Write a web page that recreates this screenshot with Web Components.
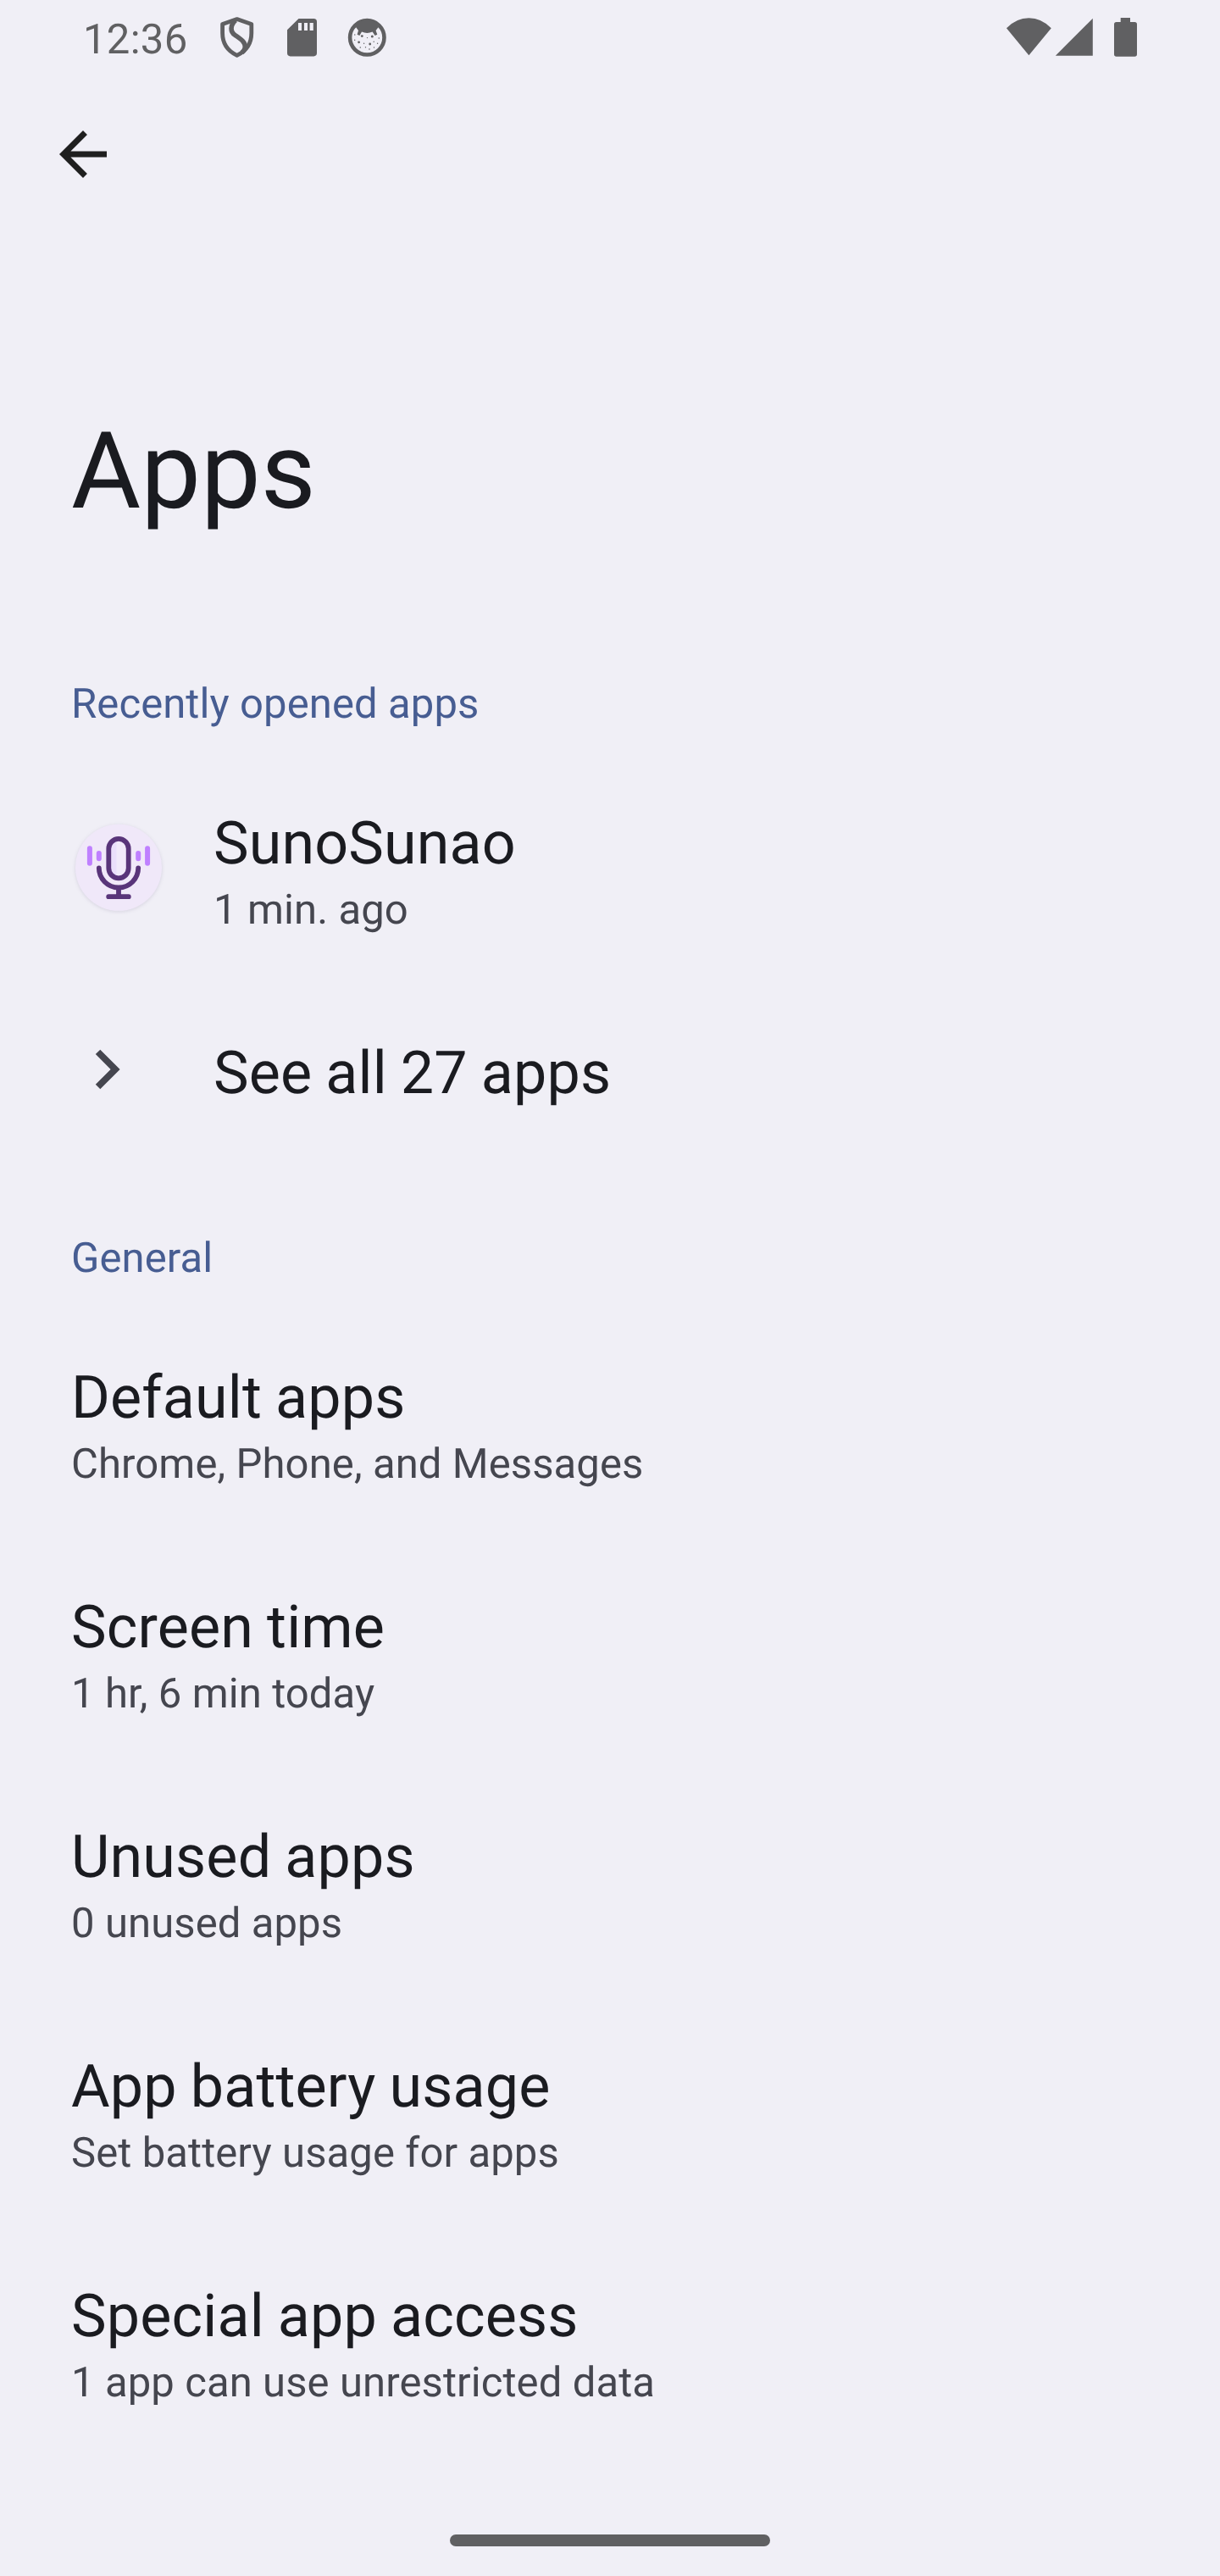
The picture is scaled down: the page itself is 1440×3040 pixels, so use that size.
<!DOCTYPE html>
<html lang="en">
<head>
<meta charset="utf-8">
<title>Apps</title>
<style>
html,body{margin:0;padding:0;background:#f0eff6}
body{width:1440px;height:3040px;overflow:hidden;font-family:Roboto,sans-serif;color:#1a1b20;text-rendering:geometricPrecision}
</style>
</head>
<body>
<settings-screen>
  <status-bar slot="status" time="12:36"></status-bar>
  <top-bar slot="top" heading="Apps"></top-bar>
  <section-header>Recently opened apps</section-header>
  <settings-row with-icon>
    <app-icon slot="icon"></app-icon>
    SunoSunao
    <span slot="summary">1 min. ago</span>
  </settings-row>
  <settings-row with-icon>
    <chevron-icon slot="icon"></chevron-icon>
    See all 27 apps
  </settings-row>
  <section-header>General</section-header>
  <settings-row>Default apps<span slot="summary">Chrome, Phone, and Messages</span></settings-row>
  <settings-row>Screen time<span slot="summary">1 hr, 6 min today</span></settings-row>
  <settings-row>Unused apps<span slot="summary">0 unused apps</span></settings-row>
  <settings-row>App battery usage<span slot="summary">Set battery usage for apps</span></settings-row>
  <settings-row>Special app access<span slot="summary">1 app can use unrestricted data</span></settings-row>
  <home-handle slot="nav"></home-handle>
</settings-screen>
<script>
const define = (name, render) => customElements.define(name, class extends HTMLElement {
  constructor() {
    super();
    this.attachShadow({ mode: 'open' }).innerHTML = render(this);
  }
});

define('settings-screen', () => `
<style>
:host{display:flex;flex-direction:column;width:1440px;height:3040px;background:#f0eff6}
main{flex:1;display:flex;flex-direction:column}
</style>
<slot name="status"></slot><slot name="top"></slot><main><slot></slot></main><slot name="nav"></slot>`);

define('status-bar', el => `
<style>
:host{display:flex;justify-content:space-between;height:90px;color:#606062}
div{display:flex}
.left{padding-left:98px}
time{display:block;width:152px;font-size:49px;letter-spacing:.3px;line-height:58px;padding-top:18px;box-sizing:border-box;white-space:nowrap}
svg{display:block;height:90px}
</style>
<div class="left">
  <time>${el.getAttribute('time')}</time>
  <svg width="60" viewBox="250 0 60 90" fill="none" stroke="currentColor" stroke-width="4.8" stroke-linejoin="round">
    <path d="M279.7 22.6L262.6 28.4V39C262.6 51.5 269 60.3 279.7 65.3C290.4 60.3 296.8 51.5 296.8 39V28.4Z"/>
    <path d="M278 24C271.5 30 271.5 37.5 277.5 41.5C284 46 290 49.5 289.3 56C288.8 59 287 61 285.5 62" stroke-width="5.6"/>
  </svg>
  <svg width="80" viewBox="310 0 80 90"><path fill="currentColor" fill-rule="evenodd" d="M352.5 22H370.3Q374 22 374 25.7V62.6Q374 66.4 370.3 66.4H342.7Q339 66.4 339 62.6V35.3ZM352 27V36H356V27ZM359 27V36H363V27ZM365.6 27V36H369.8V27Z"/></svg>
  <svg width="80" viewBox="390 0 80 90">
    <circle cx="433.3" cy="44.3" r="20.2" fill="none" stroke="currentColor" stroke-width="4.6"/>
    <g fill="currentColor">
      <path d="M417.5 31.5C423 21.5 443.6 21.5 449.1 31.5L446.5 32.2L443.6 36L445.3 40.8L442.6 42L439.6 37.6Q433.3 40.4 427 37.6L424.4 42L421.6 40.8L423 36L420.2 32.2Z"/>
      <circle cx="427.3" cy="42.6" r="1.4"/><circle cx="439.3" cy="43" r="1.5"/><circle cx="423.6" cy="49.8" r="1.4"/><circle cx="436.7" cy="52" r="1.4"/>
      <circle cx="418.8" cy="41" r=".7"/><circle cx="418.7" cy="47.3" r=".7"/><circle cx="433.5" cy="44.6" r=".7"/><circle cx="429.6" cy="51.3" r=".7"/><circle cx="425.3" cy="56" r=".8"/><circle cx="431.5" cy="55.8" r=".7"/><circle cx="436" cy="58" r=".8"/><circle cx="441.2" cy="49.3" r=".7"/><circle cx="447.3" cy="45" r=".8"/><circle cx="445.6" cy="51.2" r=".7"/><circle cx="441.5" cy="56" r=".7"/>
    </g>
  </svg>
</div>
<svg width="260" viewBox="1180 0 260 90" fill="currentColor">
  <path d="M1188 33.2Q1199.5 21.2 1214.4 21.2T1240.8 33.2L1214.4 65.3Z"/>
  <path d="M1289.8 21.7V65.7H1245.8Z"/>
  <path d="M1322.7 21H1334V26H1339.3Q1342 26 1342 28.7V64Q1342 66.7 1339.3 66.7H1317.7Q1315 66.7 1315 64V28.7Q1315 26 1317.7 26H1322.7Z"/>
</svg>`);

define('top-bar', el => `
<style>
:host{display:flex;flex-direction:column;height:687px}
svg{display:block;width:84px;height:84px;margin:50px 0 0 56px}
h1{margin:258px 0 0 84px;font-weight:400;font-size:126px;line-height:148px}
</style>
<svg viewBox="0 0 24 24" fill="#1f1f1f"><path d="M20 11H7.83L13.42 5.41 12 4l-8 8 8 8 1.41-1.41L7.83 13H20z"/></svg>
<h1>${el.getAttribute('heading')}</h1>`);

define('section-header', () => `
<style>
:host{display:block;box-sizing:border-box;height:112px;padding:25px 84px 0;font-size:49px;letter-spacing:.1px;line-height:58px;color:#475d92}
</style><slot></slot>`);

define('settings-row', el => `
<style>
:host{display:flex;box-sizing:border-box;height:271px;padding:0 84px}
.icon{display:${el.hasAttribute('with-icon') ? 'block' : 'none'};width:168px;padding-top:68px}
.text{display:flex;flex-direction:column;padding-top:58px}
.title{font-size:70px;line-height:98px;letter-spacing:.15px;word-spacing:-1.5px}
.summary{font-size:49px;line-height:58px;letter-spacing:.1px;color:#45464f}
</style>
<div class="icon"><slot name="icon"></slot></div>
<div class="text"><div class="title"><slot></slot></div><div class="summary"><slot name="summary"></slot></div></div>`);

define('app-icon', () => `
<style>
:host{display:block;width:112px;height:134px}
svg{display:block}
.disc{filter:drop-shadow(0 1px 2px rgba(60,40,90,.14))}
</style>
<svg width="112" height="134" viewBox="84 957 112 134" fill="none" stroke-linecap="round">
  <circle class="disc" cx="140" cy="1023.8" r="51" fill="#f0e8f9"/>
  <rect x="128.3" y="989.9" width="23.4" height="46.4" rx="11.7" fill="#f1eafa"/>
  <path d="M137.5 990.5Q128.3 993 128.3 1002V1024Q128.3 1034 137.5 1036Z" fill="#eadffb"/>
  <g stroke="#59357a" stroke-width="5.8">
    <rect x="128.3" y="989.9" width="23.4" height="46.4" rx="11.7"/>
    <path d="M116.8 1024.3A23.2 23.2 0 0 0 163.2 1024.3M140 1048V1057M128.2 1058.2H151.8"/>
  </g>
  <path d="M105.9 1001.2V1018.8M116.8 1007V1013.2M163.2 1007V1013.2M174.1 1001.2V1018.8" stroke="#bf80ff" stroke-width="6"/>
</svg>`);

define('chevron-icon', () => `
<style>:host{display:block;width:112px;height:112px}svg{display:block}</style>
<svg width="112" height="112" viewBox="84 1228 112 112" fill="#45464f">
  <path transform="translate(79.4 1215.3) scale(3.889)" d="M10 6L8.59 7.41 13.17 12l-4.58 4.59L10 18l6-6z"/>
</svg>`);

define('home-handle', () => `
<style>
:host{display:flex;justify-content:center;height:49px}
i{display:block;width:378px;height:14px;border-radius:7px;background:#606062}
</style><i></i>`);
</script>
</body>
</html>
